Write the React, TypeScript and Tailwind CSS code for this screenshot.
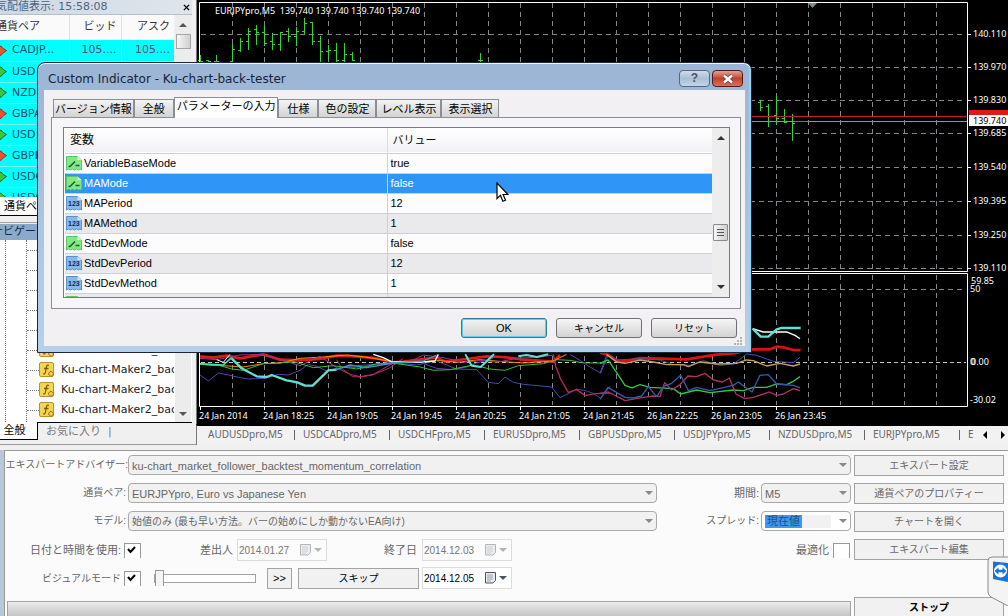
import React, { useState } from 'react';

const UI_FONT = "font-['Liberation_Sans','Noto_Sans_CJK_JP',sans-serif]";
const WIDE_FONT = "font-['DejaVu_Sans','Noto_Sans_CJK_JP',sans-serif]";

const QUOTES = [
  { symbol: 'CADJP...', bid: '105....', ask: '105....', up: false },
  { symbol: 'USD', bid: '', ask: '', up: true },
  { symbol: 'NZD', bid: '', ask: '', up: true },
  { symbol: 'GBPA', bid: '', ask: '', up: false },
  { symbol: 'USD', bid: '', ask: '', up: true },
  { symbol: 'GBPI', bid: '', ask: '', up: false },
  { symbol: 'USDC', bid: '', ask: '', up: true },
  { symbol: 'USDC', bid: '', ask: '', up: true },
];

const DIALOG_TABS = ['バージョン情報', '全般', 'パラメーターの入力', '仕様', '色の設定', 'レベル表示', '表示選択'];

const PARAMS = [
  { name: 'VariableBaseMode', value: 'true', type: 'bool' },
  { name: 'MAMode', value: 'false', type: 'bool' },
  { name: 'MAPeriod', value: '12', type: 'int' },
  { name: 'MAMethod', value: '1', type: 'int' },
  { name: 'StdDevMode', value: 'false', type: 'bool' },
  { name: 'StdDevPeriod', value: '12', type: 'int' },
  { name: 'StdDevMethod', value: '1', type: 'int' },
];

const CHART_TABS = [
  'AUDUSDpro,M5', 'USDCADpro,M5', 'USDCHFpro,M5', 'EURUSDpro,M5',
  'GBPUSDpro,M5', 'USDJPYpro,M5', 'NZDUSDpro,M5', 'EURJPYpro,M5',
];

const PRICES = [
  { y: 34, label: '140.110' },
  { y: 67, label: '139.970' },
  { y: 100, label: '139.830' },
  { y: 133, label: '139.685' },
  { y: 167, label: '139.540' },
  { y: 201, label: '139.395' },
  { y: 235, label: '139.250' },
  { y: 268, label: '139.110' },
];

const TIMES = [
  '24 Jan 2014', '24 Jan 18:25', '24 Jan 19:05', '24 Jan 19:45', '24 Jan 20:25',
  '24 Jan 21:05', '24 Jan 21:45', '26 Jan 22:25', '26 Jan 23:05', '26 Jan 23:45',
];

// x, high, low, open, close
const BARS = [
  [200, 55, 62, 60, 61], [208, 60, 62, 60, 61], [216, 55, 62, 61, 61], [232, 44, 62, 61, 49],
  [240, 38, 52, 50, 41], [248, 28, 50, 41, 31], [256, 25, 45, 29, 32], [264, 26, 46, 32, 43],
  [272, 33, 50, 41, 44], [280, 32, 51, 44, 32], [288, 28, 42, 31, 36], [296, 27, 46, 36, 31],
  [304, 18, 34, 31, 23], [312, 22, 45, 22, 41], [320, 36, 62, 41, 51], [328, 45, 60, 51, 50],
  [336, 43, 62, 50, 60], [344, 43, 62, 60, 54], [352, 52, 61, 54, 60], [480, 53, 62, 60, 60],
  [760, 100, 111, 102, 107], [768, 104, 127, 106, 116], [776, 96, 124, 115, 118],
  [784, 109, 122, 118, 122], [792, 114, 141, 121, 123],
];

const LEFT_LINES = [
  { color: '#e01818', width: 8, points: '30,34 70,38 110,32 150,40 220,28 270,44 330,46 390,42 440,32 500,34 560,40 605,52 640,50 700,42 740,38 765,50 830,42 890,34 940,36 1000,44 1090,50 1110,30' },
  { color: '#ff8c00', width: 3, points: '30,58 100,62 160,66 220,56 270,54 330,40 400,36 470,30 540,38 605,50 680,52 740,46 800,52 870,44 940,50 1000,54 1090,48 1130,28' },
  { color: '#a3328c', width: 3, points: '30,40 80,44 150,30 210,28 260,40 330,62 390,34 440,68 480,88 510,95 550,88 610,54 660,50 700,30 760,38 820,52 880,46 920,52 980,40 1050,36 1090,30' },
  { color: '#5b3fb0', width: 3, points: '30,90 55,108 85,84 115,90 150,98 175,102 225,100 265,88 295,90 330,76 355,58 380,64 410,78 450,68 500,62 560,58 620,50 690,52 740,70 790,74 830,66 860,54 910,40' },
  { color: '#3a4fa8', width: 3, points: '470,66 520,70 560,58 620,54 680,60 740,48 800,72 860,74 895,112 925,116 945,96 970,112 1000,118 1085,126 1110,158 1135,146 1160,132 1190,138 1210,145 1232,160 1260,124' },
  { color: '#c02850', width: 3, points: '440,44 455,70 488,95 512,96 548,90 600,68 640,40' },
  { color: '#c02850', width: 4, points: '1090,28 1098,66 1112,102 1135,142 1160,134 1186,152 1215,146 1260,144' },
  { color: '#38c038', width: 3, points: '30,58 90,62 125,72 160,76 220,56 270,54 310,50 370,68 430,62 500,72 560,56 620,56 690,66 730,76 780,74 850,60 900,72 945,76 985,62 1060,56 1100,44 1140,46 1180,54 1250,54' },
  { color: '#ffffff', width: 3, points: '80,44 100,52 120,28' },
  { color: '#ffffff', width: 4, points: '550,28 580,38 605,50 680,52 735,48 745,28' },
  { color: '#40e0a0', width: 5, points: '30,56 60,58 100,60 125,38' },
  { color: '#60e0d0', width: 7, points: '125,40 155,70 200,94 230,96 245,90 290,106 322,112 345,122 368,122 415,76 440,74' },
  { color: '#30a0c0', width: 4, points: '440,74 480,60 530,68 610,54 700,48 740,30' },
  { color: '#60e0d0', width: 6, points: '826,28 845,62 872,66 912,28' },
  { color: '#60e0d0', width: 6, points: '985,34 1010,30 1040,36 1075,28' },
  { color: '#5b3fb0', width: 3, points: '1140,28 1170,46 1200,66 1232,84 1250,40 1258,28' },
];

const RIGHT_LINES = [
  { color: '#e01010', width: 8, points: '0,278 24,284 50,302 75,304 120,294 180,296 260,298 310,290 350,284 400,280 460,268 510,268 530,260 550,262 580,270 602,270' },
  { color: '#4a50b8', width: 3, points: '0,340 20,286 50,300 120,296 180,300 220,314 270,316 310,302 360,316 400,312 420,298 440,282 470,286 520,304 580,308 600,292' },
  { color: '#c8a050', width: 4, points: '20,284 50,306 75,310 120,300 160,306 200,314 250,314 265,320 300,306 350,312 410,310 440,300 460,302 500,318 540,310 580,318 600,312' },
  { color: '#30c840', width: 4, points: '0,310 24,300 50,338 75,376 96,384 120,374 150,382 220,386 242,402 290,390 330,398 400,390 430,392 460,382 500,382 530,372 560,374 580,364 600,350' },
  { color: '#b03068', width: 4, points: '0,400 25,396 75,422 130,412 160,408 180,410 194,368 215,390 240,374 264,348 290,350 315,340 340,360 368,366 388,354 408,402 434,416 460,412 508,396 530,406 550,402 580,386 600,392' },
  { color: '#3a58a8', width: 4, points: '0,418 24,382 75,412 100,414 125,408 145,380 170,410 190,380 215,370 242,346 265,392 290,382 330,392 400,376 415,366 456,396 480,346 505,344 530,372 580,376 600,384' },
  { color: '#ffffff', width: 4, points: '458,206 490,216 560,216 585,226 600,236' },
  { color: '#60e0d0', width: 7, points: '458,206 482,230 505,230 530,208 545,204 602,204' },
];

const Chevron: React.FC<{ className?: string }> = ({ className }) => (
  <svg viewBox="0 0 8 4" className={`w-2 h-1 shrink-0 ${className ?? ''}`} fill="currentColor">
    <path d="M0 0h8L4 4z" />
  </svg>
);

const QuoteIcon: React.FC<{ up: boolean }> = ({ up }) => (
  <svg viewBox="0 0 7 11" className="w-[7px] h-[11px] block">
    <path
      d="M-3 3L1 1L2.500 3L6.500 5.500L2.500 8.500L1 10.500L-3 8z"
      fill={up ? '#3fc43a' : '#f0502c'}
      stroke={up ? '#1c6e1c' : '#96301a'}
      strokeWidth="1"
    />
  </svg>
);

const ParamIcon: React.FC<{ type: string }> = ({ type }) => {
  const isBool = type === 'bool';
  return (
    <svg viewBox="0 0 16 16" className="w-4 h-4 block">
      <path
        d="M.5 1.500h11l4 3.500v10l-1.500-1-1.500 1-2-1-2 1-2-1-2 1-2-1-2 1z"
        fill={isBool ? '#84e884' : '#86b9ec'}
        stroke={isBool ? '#5cc46c' : '#5a92cc'}
      />
      <path d="M11.500 1.500v3.500h4z" fill={isBool ? '#d5f7d8' : '#d3e6fa'} />
      {isBool ? (
        <path d="M2.500 11.500h1.500l5-5M9.500 10.500h4" fill="none" stroke="#0e6a26" strokeWidth="1.600" />
      ) : (
        <text x="2" y="11" fontSize="7" fontWeight="bold" fontFamily="Liberation Sans" fill="#0d2f5c">123</text>
      )}
    </svg>
  );
};

const FunctionIcon = () => (
  <svg viewBox="0 0 16 16" className="w-4 h-4 shrink-0">
    <rect x="0.500" y="0.500" width="14" height="14" rx="1.500" fill="#f3d650" stroke="#b8932a" />
    <path d="M10 3.500c-2-1-2.500.5-2.800 2.500L6.500 10c-.3 1.800-1 2.200-2.300 1.600M5 6.500h4.500" fill="none" stroke="#7d5c12" strokeWidth="1.300" />
    <path d="M12 9l3 2.700-3 2.800-3-2.800z" fill="#f7c948" stroke="#9a741a" />
  </svg>
);

const CalendarIcon = () => (
  <svg viewBox="0 0 12 12" className="w-3 h-3" fill="none" stroke="currentColor">
    <path d="M.5.5h10v8l-2.500 2.500H.5z" fill="#e9ecf1" />
    <path d="M2.500 3h6M2.500 5h6M2.500 7h6M2.500 9h4" strokeDasharray="1 1" />
  </svg>
);

const MarketWatch = () => (
  <section>
    <div className="h-[15px] flex items-center justify-between overflow-hidden bg-gradient-to-r from-[#cdd8e4] to-[#dfe5ec] border-b border-[#b5bfca]">
      <span className="-ml-1 text-[11px] leading-[14px] text-[#4e6480] whitespace-nowrap">気配値表示: 15:58:08</span>
      <button aria-label="閉じる" className="w-5 pr-0.5 flex justify-end">
        <svg viewBox="0 0 8 8" className="w-[7px] h-[7px]" stroke="#000" strokeWidth="1.600"><path d="M1 1l6 6M7 1L1 7" /></svg>
      </button>
    </div>
    <div className="h-[182px] flex overflow-hidden">
      <table className="w-[174px] table-fixed border-collapse text-[11px]">
        <thead>
          <tr className="h-[25px] bg-[#fbfafb] text-[#333]">
            <th className="w-[69px] font-normal text-left border-r border-[#e2e2e2] whitespace-nowrap"><span className="-ml-1">通貨ペア</span></th>
            <th className="w-[52px] font-normal text-right pr-1 border-r border-[#e2e2e2]">ビッド</th>
            <th className="font-normal text-right pr-1">アスク</th>
          </tr>
        </thead>
        <tbody>
          {QUOTES.map((quote, i) => (
            <tr key={i} className="h-[21px] bg-[#00ffff] text-[#1d4b66] border-b border-[#7df3f6]">
              <td className="border-r border-[#7df3f6]">
                <div className="flex items-center gap-[5px] whitespace-nowrap leading-[18px]">
                  <QuoteIcon up={quote.up} />
                  {quote.symbol}
                </div>
              </td>
              <td className="text-right pr-1 text-[#5a4a6a] border-r border-[#7df3f6]">{quote.bid}</td>
              <td className="text-right pr-1 text-[#5a4a6a]">{quote.ask}</td>
            </tr>
          ))}
        </tbody>
      </table>
      <div className="w-4 ml-px flex flex-col items-center bg-[#ececec]">
        <Chevron className="rotate-180 mt-2 text-[#555]" />
        <div className="w-[15px] h-[15px] mt-[7px] border border-[#a5a5a5] bg-gradient-to-r from-[#f6f6f6] to-[#d0d0d0]" />
      </div>
    </div>
    <div className={`h-[19px] pl-1 bg-white border-b border-black text-[11px] leading-[18px] whitespace-nowrap overflow-hidden ${UI_FONT}`}>通貨ペ</div>
  </section>
);

const Navigator = () => (
  <section className="flex-1 flex flex-col mt-[6px] border-t border-[#a0a0a0]">
    <div className="h-4 mt-px bg-[#8ba9c8] text-[11px] leading-4 text-[#16283d] whitespace-nowrap overflow-hidden">
      <span className="-ml-2">ナビゲータ</span>
    </div>
    <div className="flex-1 flex bg-white">
      <div className="w-[174px] flex overflow-hidden">
        <div className="w-[6px] border-r border-dotted border-[#777]" />
        <ul className="ml-[20px] flex-1 min-w-0 border-l border-dotted border-[#777]">
          {[0, 1, 2, 3, 4, 5, 6, 7, 8].map(i => (
            <li key={i} className="h-5 flex items-center">
              <span className="w-[12px] shrink-0 border-t border-dotted border-[#777]" />
              {i > 4 && <FunctionIcon />}
              {i > 4 && <span className="ml-1.5 text-[11px] text-[#222] whitespace-nowrap">Ku-chart-Maker2_back</span>}
            </li>
          ))}
        </ul>
      </div>
      <div className="w-4 ml-px flex flex-col items-center justify-end pb-1.5 bg-[#ececec] text-[#555]">
        <Chevron />
      </div>
    </div>
    <div className="h-[22px] flex text-[11px] leading-[17px] whitespace-nowrap">
      <button className="w-[38px] h-[18px] pr-2 bg-white border-b border-r border-black">全般</button>
      <button className="flex-1 h-[18px] border-t border-black pl-2 text-left text-[#777]">お気に入り&nbsp; |</button>
    </div>
  </section>
);

const PriceChart = () => (
  <svg className="block w-full h-[424px] bg-black" fontFamily="'Noto Sans', sans-serif" fontSize="9" fill="#fff">
    <g transform="translate(-196 0)">
      <g stroke="#85858c" strokeDasharray="5 4">
        {Array.from({ length: 23 }, (_, i) => 232 + i * 32).map(x => (
          <path key={x} d={`M${x}.5 3V270M${x}.5 275V405`} />
        ))}
        {PRICES.map(p => <path key={p.y} d={`M201 ${p.y}.5H966`} />)}
        <path d="M201 289.500H966" />
      </g>
      <path d="M201 362.500H966" stroke="#c4c4c4" strokeDasharray="4 3" />
      <path d="M808 3h9l-4.500 5z" fill="#7d8a92" />

      <g stroke="#35d435">
        {BARS.map(([x, high, low, open, close]) => (
          <path key={x} d={`M${x}.5 ${high}V${low}M${x - 2} ${open}.5h3M${x} ${close}.5h3`} />
        ))}
      </g>
      <path d="M201 116.500H967" stroke="#c4202c" />
      <path d="M201 121.500H967" stroke="#8795a0" />
      <path d="M794 121.500h13" stroke="#1fa53a" />

      <g transform="translate(190 345) scale(0.3333)" fill="none" strokeLinejoin="round">
        {LEFT_LINES.map((l, i) => <polyline key={i} points={l.points} stroke={l.color} strokeWidth={l.width} />)}
      </g>
      <g transform="translate(600 260) scale(0.3333)" fill="none" strokeLinejoin="round">
        {RIGHT_LINES.map((l, i) => <polyline key={i} points={l.points} stroke={l.color} strokeWidth={l.width} />)}
      </g>

      <path d="M199.500 271.500V2.500H967.500V271.500zM199.500 406.500V273.500H967.500V406.500z" fill="none" stroke="#fff" />
      <path d="M196.500 0V424" stroke="#77777a" />

      <text x="215" y="14" xmlSpace="preserve">EURJPYpro,M5  139.740 139.740 139.740 139.740</text>
      {PRICES.map(p => (
        <g key={p.y}>
          <path d={`M968 ${p.y}.5h3`} stroke="#fff" />
          <text x="973" y={p.y + 3}>{p.label}</text>
        </g>
      ))}
      <rect x="969" y="110" width="39" height="6" fill="#e01818" />
      <rect x="969" y="115" width="39" height="11" fill="#fff" />
      <text x="973" y="124" fill="#000">139.740</text>
      <text x="971" y="284">59.85</text>
      <text x="970" y="292">50</text>
      <text x="970" y="365">0</text>
      <text x="971" y="365">0.00</text>
      <text x="970" y="403">-30.02</text>
      {TIMES.map((t, i) => (
        <g key={t}>
          <path d={`M${200 + i * 64}.5 406v4`} stroke="#fff" />
          <text x={199 + i * 64} y="419">{t}</text>
        </g>
      ))}
    </g>
  </svg>
);

const ChartTabs = () => (
  <nav className="h-[21px] flex items-center border-t-2 border-t-black border-l border-l-[#777] bg-[#f3f2f3] pl-[11px] pb-0.5 overflow-hidden font-['Noto_Sans',sans-serif] text-[10px] text-[#666]">
    {CHART_TABS.map(tab => (
      <button key={tab} className="shrink-0 w-[95px] flex items-center justify-between pr-2 whitespace-nowrap">
        {tab}
        <span className="w-px h-[10px] bg-[#666]" />
      </button>
    ))}
    <button>E</button>
    <span className="flex-1" />
    <button aria-label="前へ" className="pr-2.5"><Chevron className="rotate-90 text-black" /></button>
    <button aria-label="次へ" className="pr-px"><Chevron className="-rotate-90 text-black" /></button>
  </nav>
);

const IndicatorDialog = () => {
  const [activeTab, setActiveTab] = useState('パラメーターの入力');
  const [selected, setSelected] = useState('MAMode');

  return (
    <div className={`absolute left-[37px] top-[62px] w-[715px] rounded-t-lg border border-[#1c2836] bg-gradient-to-b from-[#9db5d4] to-[#b7d0ea] px-[6px] pb-[6px] shadow-[inset_0_1px_0_#eef5fc,inset_-2px_0_0_#8fd6f5] text-[11px] text-black ${UI_FONT}`}>
      <div className="h-[27px] flex items-center pl-1 pt-1">
        <h1 className={`flex-1 text-[12px] text-[#14233a] ${WIDE_FONT}`}>Custom Indicator - Ku-chart-back-tester</h1>
        <button aria-label="ヘルプ" className="w-[31px] h-[17px] mr-0.5 rounded-sm border border-[#54687f] bg-gradient-to-b from-[#cfdcea] via-[#a9bed5] to-[#c3d6ea] text-[12px] leading-[15px] font-bold text-[#46536b]">?</button>
        <button aria-label="閉じる" className="w-[31px] h-[17px] mr-0.5 rounded-sm border border-[#4e1c1c] bg-gradient-to-b from-[#e3a093] via-[#c3412c] to-[#d8705a] flex items-center justify-center">
          <svg viewBox="0 0 12 10" className="w-3 h-2.5" fill="none">
            <path d="M2 1.500l8 7M10 1.500l-8 7" stroke="#6d3a3a" strokeWidth="4" />
            <path d="M2 1.500l8 7M10 1.500l-8 7" stroke="#fff" strokeWidth="2.400" />
          </svg>
        </button>
      </div>

      <div className="bg-[#f2f0f2] pt-[7px] pl-[7px] pr-1 pb-2">
        <div className="flex items-end pl-[2px] h-5 relative z-10">
          {DIALOG_TABS.map(tab => (
            <button
              key={tab}
              onClick={() => setActiveTab(tab)}
              className={tab === activeTab
                ? 'h-[21px] -mb-px px-0.5 pb-1 border border-b-0 border-[#8c8e96] bg-white whitespace-nowrap leading-4'
                : 'h-[18px] px-px min-w-10 last:min-w-[58px] border border-b-0 border-[#8c8e96] bg-gradient-to-b from-[#f3f3f3] to-[#d4d4d4] whitespace-nowrap leading-4 nth-5:min-w-[58px] nth-6:min-w-[65px]'}
            >
              {tab}
            </button>
          ))}
        </div>

        <div className="border border-[#8c8e96] bg-[#f6f5f7] pt-[9px] pl-[11px] pr-[10px] pb-[10px]">
          <div className="h-[171px] flex overflow-hidden border border-[#77798a] bg-white pl-px">
            <table className="flex-1 table-fixed border-collapse">
              <thead>
                <tr className="h-[25px] border-b border-[#cfcfd4] bg-gradient-to-b from-white to-[#f2f2f6]">
                  <th className="w-[322px] pl-[5px] text-left text-[12px] font-normal border-r border-[#dcdce0]">変数</th>
                  <th className="pl-[5px] text-left font-normal">バリュー</th>
                </tr>
              </thead>
              <tbody>
                {PARAMS.map((param, i) => (
                  <tr
                    key={param.name}
                    onClick={() => setSelected(param.name)}
                    className={param.name === selected
                      ? 'h-5 bg-[#2f96f8] text-white border-b border-[#cfcfd4]'
                      : i % 2 ? 'h-5 bg-[#eae9eb] border-b border-[#cfcfd4]' : 'h-5 bg-[#fdfcfd] border-b border-[#cfcfd4]'}
                  >
                    <td className="border-r border-[#cfcfd4]">
                      <div className="flex items-center gap-0.5 pl-px h-[19px]"><ParamIcon type={param.type} />{param.name}</div>
                    </td>
                    <td className="pl-[3px]">{param.value}</td>
                  </tr>
                ))}
                <tr className="h-5 bg-[#eae9eb]">
                  <td className="border-r border-[#cfcfd4]"><div className="pl-px"><ParamIcon type="bool" /></div></td>
                  <td />
                </tr>
              </tbody>
            </table>
            <div className="w-[17px] flex flex-col items-center justify-between bg-[#ededee] text-[#333] pt-2 pb-2">
              <Chevron className="rotate-180" />
              <div className="w-[15px] h-[17px] mt-10 flex flex-col items-center justify-center gap-0.5 border border-[#8b8b8b] rounded-[1px] bg-gradient-to-r from-[#f6f6f6] to-[#cfcfcf]">
                <span className="w-[7px] h-px bg-[#555]" />
                <span className="w-[7px] h-px bg-[#555]" />
                <span className="w-[7px] h-px bg-[#555]" />
              </div>
              <Chevron />
            </div>
          </div>
        </div>

        <div className="flex justify-end gap-[9px] pt-[9px] pr-1">
          <button className="w-[86px] h-5 rounded-[3px] border border-[#2c7f9f] shadow-[inset_0_0_0_1px_#63cdea] bg-gradient-to-b from-[#f3f3f3] to-[#d3d3d3]">OK</button>
          <button className="w-[86px] h-5 rounded-[3px] border border-[#707070] bg-gradient-to-b from-[#f6f6f6] to-[#d3d3d3] text-[10px]">キャンセル</button>
          <button className="w-[86px] h-5 rounded-[3px] border border-[#707070] bg-gradient-to-b from-[#f6f6f6] to-[#d3d3d3] text-[10px]">リセット</button>
        </div>
      </div>
      <svg viewBox="0 0 9 9" className="absolute right-[8px] bottom-[6px] w-[9px] h-[9px]" fill="#b3b3b3">
        <path d="M6 0h2v2H6zM3 3h2v2H3zM6 3h2v2H6zM0 6h2v2H0zM3 6h2v2H3zM6 6h2v2H6z" />
      </svg>
    </div>
  );
};

interface ComboProps {
  id: string;
  label: string;
  value: string;
  labelClass: string;
  boxClass: string;
}

const Combo: React.FC<ComboProps> = ({ id, label, value, labelClass, boxClass }) => (
  <>
    <label htmlFor={id} className={`text-right whitespace-nowrap ${labelClass}`}>{label}</label>
    <div className={`relative h-5 ${boxClass}`}>
      <select id={id} className="appearance-none block w-full h-5 px-[3px] rounded-sm border border-[#a9a9a9] bg-[#f2f1f2] text-[#666]">
        <option>{value}</option>
      </select>
      <Chevron className="absolute right-1 top-2 text-[#888] pointer-events-none" />
    </div>
  </>
);

const DateField: React.FC<{ label: string; value: string; active?: boolean }> = ({ label, value, active }) => (
  <div className={active
    ? 'w-[90px] h-[22px] flex items-center border border-[#dcdcdc] bg-white text-black'
    : 'w-[90px] h-[22px] flex items-center border border-[#dcdcdc] bg-[#fdfcfd] text-[#777]'}
  >
    <input aria-label={label} defaultValue={value} className="w-[62px] pl-px text-[10px] outline-none" />
    <button aria-label="カレンダー" className={active ? 'flex items-center gap-0.5 text-[#4d5563]' : 'flex items-center gap-0.5 text-[#b5b5b8]'}>
      <CalendarIcon />
      <Chevron />
    </button>
  </div>
);

const Check: React.FC<{ id: string; checked: boolean }> = ({ id, checked }) => {
  const [on, setOn] = useState(checked);
  return (
    <span className="relative w-[17px] h-[15px] shrink-0">
      <input
        id={id}
        type="checkbox"
        checked={on}
        onChange={() => setOn(!on)}
        className="appearance-none block w-[17px] h-[15px] border border-b-0 border-[#999] bg-white"
      />
      {on && (
        <svg viewBox="0 0 9 8" className="absolute left-[3px] top-[3px] w-[9px] h-2 pointer-events-none" fill="none" stroke="#000" strokeWidth="2">
          <path d="M1 3l2.500 3L8 1" />
        </svg>
      )}
    </span>
  );
};

const SIDE_BUTTON = 'h-[21px] border border-[#a3a3a3] bg-[#f2f1f2] text-[#666]';

const StrategyTester = () => (
  <div className={`flex-1 flex bg-[#b9c8d9] pl-1 mt-[5px] text-[10px] text-[#666] ${UI_FONT}`}>
    <div className="flex-1 flex gap-[3px] border-t border-l border-[#999] bg-[#fcfbfc] pt-1 pr-1">
      <div className="flex-1 flex flex-col min-w-0">
        <div className="h-7 flex items-start leading-5">
          <Combo id="expert" label="エキスパートアドバイザー:" value="ku-chart_market_follower_backtest_momentum_correlation" labelClass="w-[123px]" boxClass="flex-1 text-[11px]" />
        </div>
        <div className="h-7 flex items-start leading-5">
          <Combo id="symbol" label="通貨ペア:" value="EURJPYpro, Euro vs Japanese Yen" labelClass="w-[123px] pr-0.5" boxClass="flex-1 text-[11px]" />
          <Combo id="period" label="期間:" value="M5" labelClass="w-[102px] text-[11px]" boxClass="w-[90px] ml-0.5 text-[11px]" />
        </div>
        <div className="h-7 flex items-start leading-5">
          <Combo id="model" label="モデル:" value="始値のみ (最も早い方法。バーの始めにしか動かないEA向け)" labelClass="w-[123px] pr-0.5" boxClass="flex-1" />
          <label htmlFor="spread" className="w-[102px] text-right">スプレッド:</label>
          <div className="w-[90px] h-5 ml-0.5 flex items-center justify-between px-[3px] rounded-sm border border-[#a9a9a9] bg-white">
            <div className="w-[66px] h-[13px] flex bg-[#f2f1f2]">
              <input id="spread" defaultValue="現在値" className="w-[37px] h-[13px] px-0.5 text-[11px] bg-[#3d98f0] text-[#1c4f8c] outline-none" />
            </div>
            <Chevron className="text-[#888]" />
          </div>
        </div>
        <div className="h-7 flex items-center pb-1.5 text-[11px]">
          <label htmlFor="use-date" className="w-[116px] text-right whitespace-nowrap">日付と時間を使用:</label>
          <span className="w-[3px]" />
          <Check id="use-date" checked />
          <span className="w-[92px] text-right">差出人</span>
          <span className="w-1" />
          <DateField label="差出人" value="2014.01.27" />
          <span className="w-[90px] text-right">終了日</span>
          <span className="w-[5px]" />
          <DateField label="終了日" value="2014.12.03" />
          <label htmlFor="optimize" className="flex-1 text-right pr-1">最適化</label>
          <Check id="optimize" checked={false} />
          <span className="w-px" />
        </div>
        <div className="h-7 flex items-center pb-1.5">
          <label htmlFor="visual" className="w-[116px] text-right whitespace-nowrap">ビジュアルモード</label>
          <span className="w-[3px]" />
          <Check id="visual" checked />
          <input
            aria-label="速度"
            type="range"
            defaultValue={0}
            className="appearance-none ml-[13px] w-[102px] h-4 bg-transparent [&::-webkit-slider-runnable-track]:h-[9px] [&::-webkit-slider-runnable-track]:border [&::-webkit-slider-runnable-track]:border-[#a3a3a3] [&::-webkit-slider-runnable-track]:bg-white [&::-webkit-slider-thumb]:appearance-none [&::-webkit-slider-thumb]:w-[9px] [&::-webkit-slider-thumb]:h-4 [&::-webkit-slider-thumb]:-mt-[5px] [&::-webkit-slider-thumb]:border [&::-webkit-slider-thumb]:border-b-0 [&::-webkit-slider-thumb]:border-[#999] [&::-webkit-slider-thumb]:bg-[#f4f4f4]"
          />
          <button className="w-[25px] h-[21px] ml-[11px] border border-[#a3a3a3] bg-[#f2f1f2] text-[11px] text-black">&gt;&gt;</button>
          <button className="w-[121px] h-[21px] ml-1.5 mr-[3px] border border-[#a3a3a3] bg-[#f2f1f2] text-black">スキップ</button>
          <DateField label="スキップ先" value="2014.12.05" active />
        </div>
        <div className="mt-1.5 ml-0.5 flex-1 border border-b-0 border-[#a3a3a3] bg-gradient-to-b from-[#ececec] to-[#c4c4c4]" />
      </div>

      <div className="w-[150px] shrink-0 flex flex-col gap-[7px]">
        <button className={SIDE_BUTTON}>エキスパート設定</button>
        <button className={SIDE_BUTTON}>通貨ペアのプロパティー</button>
        <button className={SIDE_BUTTON}>チャートを開く</button>
        <button className={SIDE_BUTTON}>エキスパート編集</button>
        <button className="h-[19px] mt-auto border border-b-0 border-[#a3a3a3] bg-[#f2f1f2] text-[10px] font-bold text-black">ストップ</button>
      </div>
    </div>
  </div>
);

const App: React.FC = () => (
  <main className={`relative min-h-screen flex flex-col overflow-hidden bg-[#f1f0f1] ${WIDE_FONT}`}>
    <div className="flex">
      <aside className="w-[196px] shrink-0 flex flex-col pr-1 border-b border-[#999]">
        <MarketWatch />
        <Navigator />
      </aside>
      <div className="flex-1 min-w-0">
        <PriceChart />
        <ChartTabs />
      </div>
    </div>

    <StrategyTester />
    <IndicatorDialog />

    {/* mouse pointer */}
    <svg viewBox="0 0 13 21" className="absolute left-[496px] top-[182px] w-[13px] h-[21px] pointer-events-none">
      <path d="M1 1v15.500l3.500-3.300 2.300 6 2.700-1.100-2.400-5.600H12z" fill="#fff" stroke="#000" strokeWidth="1.200" />
    </svg>

    {/* remote session flap */}
    <svg viewBox="0 0 21 50" className="absolute right-0 top-[556px] w-[21px] h-[50px]">
      <path d="M21 1H5Q1 1 1 5v31q0 3 3 5l17 9" fill="#f4f4f5" stroke="#8a8a8e" />
      <path d="M6 5.500L21 7v19L6 23z" fill="#1673d8" />
      <circle cx="13.500" cy="15" r="6.500" fill="#fff" />
      <path d="M7.500 15l4-3.500v2.300h4v-2.300l4 3.500-4 3.500v-2.300h-4v2.300z" fill="#1673d8" />
    </svg>
  </main>
);

export default App;
